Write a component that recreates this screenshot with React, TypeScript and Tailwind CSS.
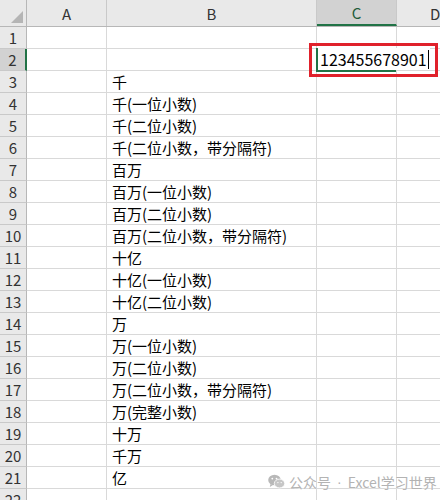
const labels: Record<number, string> = {
  3: "千",
  4: "千(一位小数)",
  5: "千(二位小数)",
  6: "千(二位小数，带分隔符)",
  7: "百万",
  8: "百万(一位小数)",
  9: "百万(二位小数)",
  10: "百万(二位小数，带分隔符)",
  11: "十亿",
  12: "十亿(一位小数)",
  13: "十亿(二位小数)",
  14: "万",
  15: "万(一位小数)",
  16: "万(二位小数)",
  17: "万(二位小数，带分隔符)",
  18: "万(完整小数)",
  19: "十万",
  20: "千万",
  21: "亿",
};

const rows = Array.from({ length: 22 }, (_, i) => i + 1);

function ColumnHeader({ label, width, active }: { label: string; width: string; active?: boolean }) {
  return (
    <div
      className={`${width} h-full flex items-center justify-center border-r border-[#c9c9c9] shrink-0 ${
        active ? "bg-[#d2d2d2] text-[#1f5c3a] border-b-2 border-b-[#217346]" : "text-[#333]"
      }`}
    >
      {label}
    </div>
  );
}

function WeChatMark() {
  return (
    <svg width="17" height="15" viewBox="0 0 17 15" className="shrink-0">
      <ellipse cx="6.5" cy="6" rx="6.3" ry="5.3" fill="#b8b8b8" />
      <path d="M2.5 10 L1.8 13 L5 11 Z" fill="#b8b8b8" />
      <ellipse cx="11.5" cy="9.5" rx="5.2" ry="4.4" fill="#c6c6c6" stroke="#fff" strokeWidth="0.8" />
      <circle cx="4.3" cy="4.6" r="0.9" fill="#fff" />
      <circle cx="8.5" cy="4.6" r="0.9" fill="#fff" />
      <circle cx="9.9" cy="8.6" r="0.7" fill="#fff" />
      <circle cx="13.2" cy="8.6" r="0.7" fill="#fff" />
    </svg>
  );
}

export default function App() {
  return (
    <div
      className="relative w-[440px] h-[500px] overflow-hidden bg-white text-[15px] leading-none"
      style={{ fontFamily: '"Noto Sans CJK SC", "Liberation Sans", sans-serif' }}
    >
      {/* column headers */}
      <div className="flex h-[27px] bg-[#e9e9e9] border-b border-[#b7b7b7]">
        <div className="w-[27px] h-full shrink-0 border-r border-[#b7b7b7] relative">
          <div className="absolute right-[3px] bottom-[3px] w-0 h-0 border-l-[12px] border-l-transparent border-b-[12px] border-b-[#b5b5b5]" />
        </div>
        <ColumnHeader label="A" width="w-[80px]" />
        <ColumnHeader label="B" width="w-[210px]" />
        <ColumnHeader label="C" width="w-[80px]" active />
        <div className="w-[80px] h-full shrink-0 border-r border-[#c9c9c9] text-[#333] flex items-center pl-[33px]">D</div>
      </div>

      {rows.map((r) => (
        <div key={r} className="flex h-[22px]">
          <div
            className={`w-[27px] shrink-0 flex items-center justify-center border-b border-[#c9c9c9] text-[#333] ${
              r === 2 ? "bg-[#d2d2d2] border-r-2 border-r-[#217346]" : "bg-[#e9e9e9] border-r border-r-[#b7b7b7]"
            }`}
          >
            {r}
          </div>
          <div className="w-[80px] shrink-0 border-r border-b border-[#d9d9d9]" />
          <div className="w-[210px] shrink-0 border-r border-b border-[#d9d9d9] flex items-center pl-[5px] text-black">
            {labels[r] ?? ""}
          </div>
          <div className="w-[80px] shrink-0 border-r border-b border-[#d9d9d9]" />
          <div className="w-[80px] shrink-0 border-r border-b border-[#d9d9d9]" />
        </div>
      ))}

      {/* C2 in edit mode */}
      <div className="absolute left-[316px] top-[48px] w-[80px] h-[24px] border-l-2 border-b-2 border-[#217346]" />
      <div className="absolute left-[318px] top-[48px] w-[112px] h-[22px] bg-white flex items-center pl-[2px] text-black text-[16px]">
        123455678901
        <span className="ml-[1px] w-px h-[19px] bg-black" />
      </div>

      {/* annotation box */}
      <div className="absolute left-[309px] top-[43px] w-[129px] h-[34px] border-[3px] border-[#e0212b]" />

      {/* watermark */}
      <div className="absolute left-[268px] top-[474px] flex items-center whitespace-nowrap text-[14px] text-[#b3b3b3] [text-shadow:0_0_2px_#fff]">
        <WeChatMark />
        <span className="ml-[4px]">公众号</span>
        <span className="mx-[6px] font-['Liberation_Sans']">·</span>
        <span>Excel学习世界</span>
      </div>
    </div>
  );
}
